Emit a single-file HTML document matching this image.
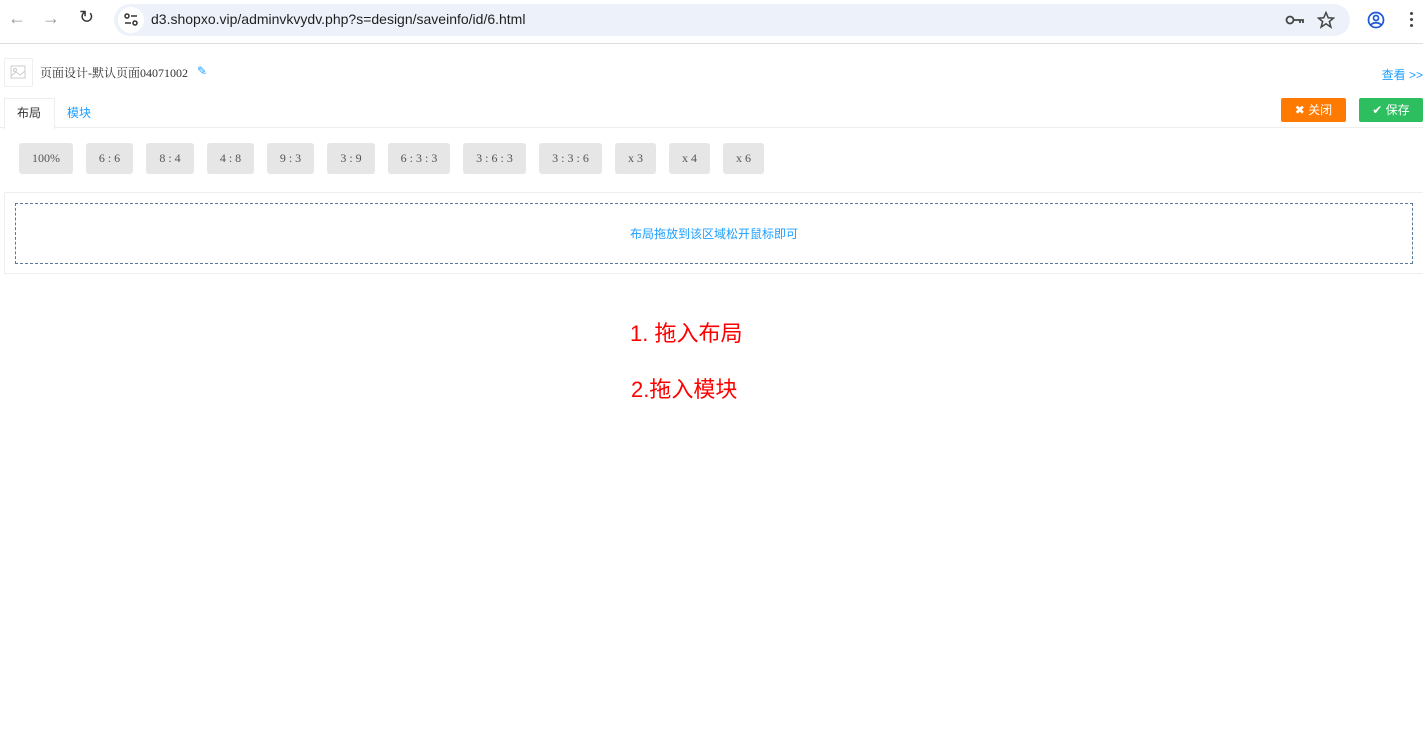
<!DOCTYPE html>
<html><head><meta charset="utf-8"><style>
body{margin:0;width:1423px;height:748px;background:#fff;font-family:"Liberation Serif","Noto Serif CJK SC",serif;position:relative;overflow:hidden}
.a{position:absolute;white-space:nowrap}
.chrome{left:0;top:0;width:1423px;height:43px;background:#fff;border-bottom:1px solid #ddd}
.url{left:114px;top:4px;width:1236px;height:32px;background:#edf2fa;border-radius:16px}
.urltxt{left:151px;top:11px;font:14px "Liberation Sans",sans-serif;color:#1f1f1f}
.btn{top:143px;height:31px;background:#e6e6e6;border-radius:3px;font-size:12px;color:#555;line-height:31px;text-align:center}
.ui{font-family:"Liberation Sans","Noto Sans CJK SC",sans-serif}
</style></head><body>
<div class="a chrome"></div>
<div class="a ui" style="left:8px;top:8px;font-size:18px;color:#999">←</div>
<div class="a ui" style="left:42px;top:8px;font-size:18px;color:#999">→</div>
<div class="a ui" style="left:79px;top:7px;font-size:18px;color:#333">↻</div>
<div class="a url"></div>
<div class="a" style="left:118px;top:7px;width:26px;height:26px;border-radius:13px;background:#fff"></div>
<svg class="a" style="left:123px;top:12px" width="16" height="16" viewBox="0 0 16 16" fill="none" stroke="#333" stroke-width="1.5"><circle cx="4" cy="4" r="2"/><line x1="8" y1="4" x2="14" y2="4"/><circle cx="12" cy="11" r="2"/><line x1="2" y1="11" x2="8" y2="11"/></svg>
<div class="a urltxt">d3.shopxo.vip/adminvkvydv.php?s=design/saveinfo/id/6.html</div>
<svg class="a" style="left:1285px;top:13px" width="20" height="14" viewBox="0 0 20 14" fill="none" stroke="#444" stroke-width="1.8"><circle cx="5" cy="7" r="3.5"/><path d="M9 7h9v3M15 7v3"/></svg>
<svg class="a" style="left:1317px;top:11px" width="18" height="18" viewBox="0 0 24 24" fill="none" stroke="#444" stroke-width="2"><path d="M12 2l3 7 7 .5-5.5 4.5 2 7.5L12 17l-6.5 4.5 2-7.5L2 9.5 9 9z"/></svg>
<svg class="a" style="left:1367px;top:11px" width="18" height="18" viewBox="0 0 18 18" fill="none" stroke="#1a56d6" stroke-width="1.7"><circle cx="9" cy="9" r="7.5"/><circle cx="9" cy="7" r="2.5"/><path d="M4 14c2-3 8-3 10 0"/></svg>
<div class="a" style="left:1410px;top:12px;width:3px;height:3px;border-radius:2px;background:#444;box-shadow:0 6px #444,0 12px #444"></div>

<div class="a" style="left:4px;top:58px;width:27px;height:27px;border:1px solid #eee;border-radius:2px"></div>
<svg class="a" style="left:10px;top:64px" width="16" height="16" viewBox="0 0 16 16" fill="none" stroke="#ccc"><rect x="1" y="2" width="14" height="12"/><circle cx="5" cy="6" r="1.5"/><path d="M1 12l5-4 4 3 5-4"/></svg>
<div class="a" style="left:40px;top:64px;font-size:12px;color:#333">页面设计-默认页面04071002</div>
<div class="a ui" style="left:197px;top:64px;font-size:12px;color:#1e9fff">✎</div>
<div class="a ui" style="right:0;top:66px;font-size:12px;color:#1e9fff">查看 &gt;&gt;</div>

<div class="a" style="left:0;top:127px;width:1423px;border-top:1px solid #eee"></div>
<div class="a" style="left:4px;top:98px;width:49px;height:30px;border:1px solid #eee;border-bottom:1px solid #fff;background:#fff"></div>
<div class="a ui" style="left:17px;top:104px;font-size:12px;color:#333">布局</div>
<div class="a ui" style="left:67px;top:104px;font-size:12px;color:#1e9fff">模块</div>
<div class="a ui" style="left:1281px;top:98px;width:65px;height:24px;background:#ff7a00;border-radius:2px;color:#fff;font-size:12px;line-height:24px;text-align:center">✖ 关闭</div>
<div class="a ui" style="left:1359px;top:98px;width:64px;height:24px;background:#2dbe60;border-radius:2px;color:#fff;font-size:12px;line-height:24px;text-align:center">✔ 保存</div>

<div class="a btn" style="left:19px;width:54px">100%</div>
<div class="a btn" style="left:86px;width:47px">6 : 6</div>
<div class="a btn" style="left:146px;width:48px">8 : 4</div>
<div class="a btn" style="left:207px;width:47px">4 : 8</div>
<div class="a btn" style="left:267px;width:47px">9 : 3</div>
<div class="a btn" style="left:327px;width:48px">3 : 9</div>
<div class="a btn" style="left:388px;width:62px">6 : 3 : 3</div>
<div class="a btn" style="left:463px;width:63px">3 : 6 : 3</div>
<div class="a btn" style="left:539px;width:63px">3 : 3 : 6</div>
<div class="a btn" style="left:615px;width:41px">x 3</div>
<div class="a btn" style="left:669px;width:41px">x 4</div>
<div class="a btn" style="left:723px;width:41px">x 6</div>

<div class="a" style="left:4px;top:192px;width:1419px;height:82px;border:1px solid #eee;border-right:none;box-sizing:border-box"></div>
<div class="a" style="left:15px;top:203px;width:1398px;height:61px;border:1px dashed #5a7a99;box-sizing:border-box"></div>
<div class="a ui" style="left:0;width:1428px;top:225px;text-align:center;font-size:12px;color:#1e9fff">布局拖放到该区域松开鼠标即可</div>

<div class="a ui" style="left:630px;top:316px;font-size:22px;color:#f00">1. 拖入布局</div>
<div class="a ui" style="left:631px;top:372px;font-size:22px;color:#f00">2.拖入模块</div>
</body></html>
